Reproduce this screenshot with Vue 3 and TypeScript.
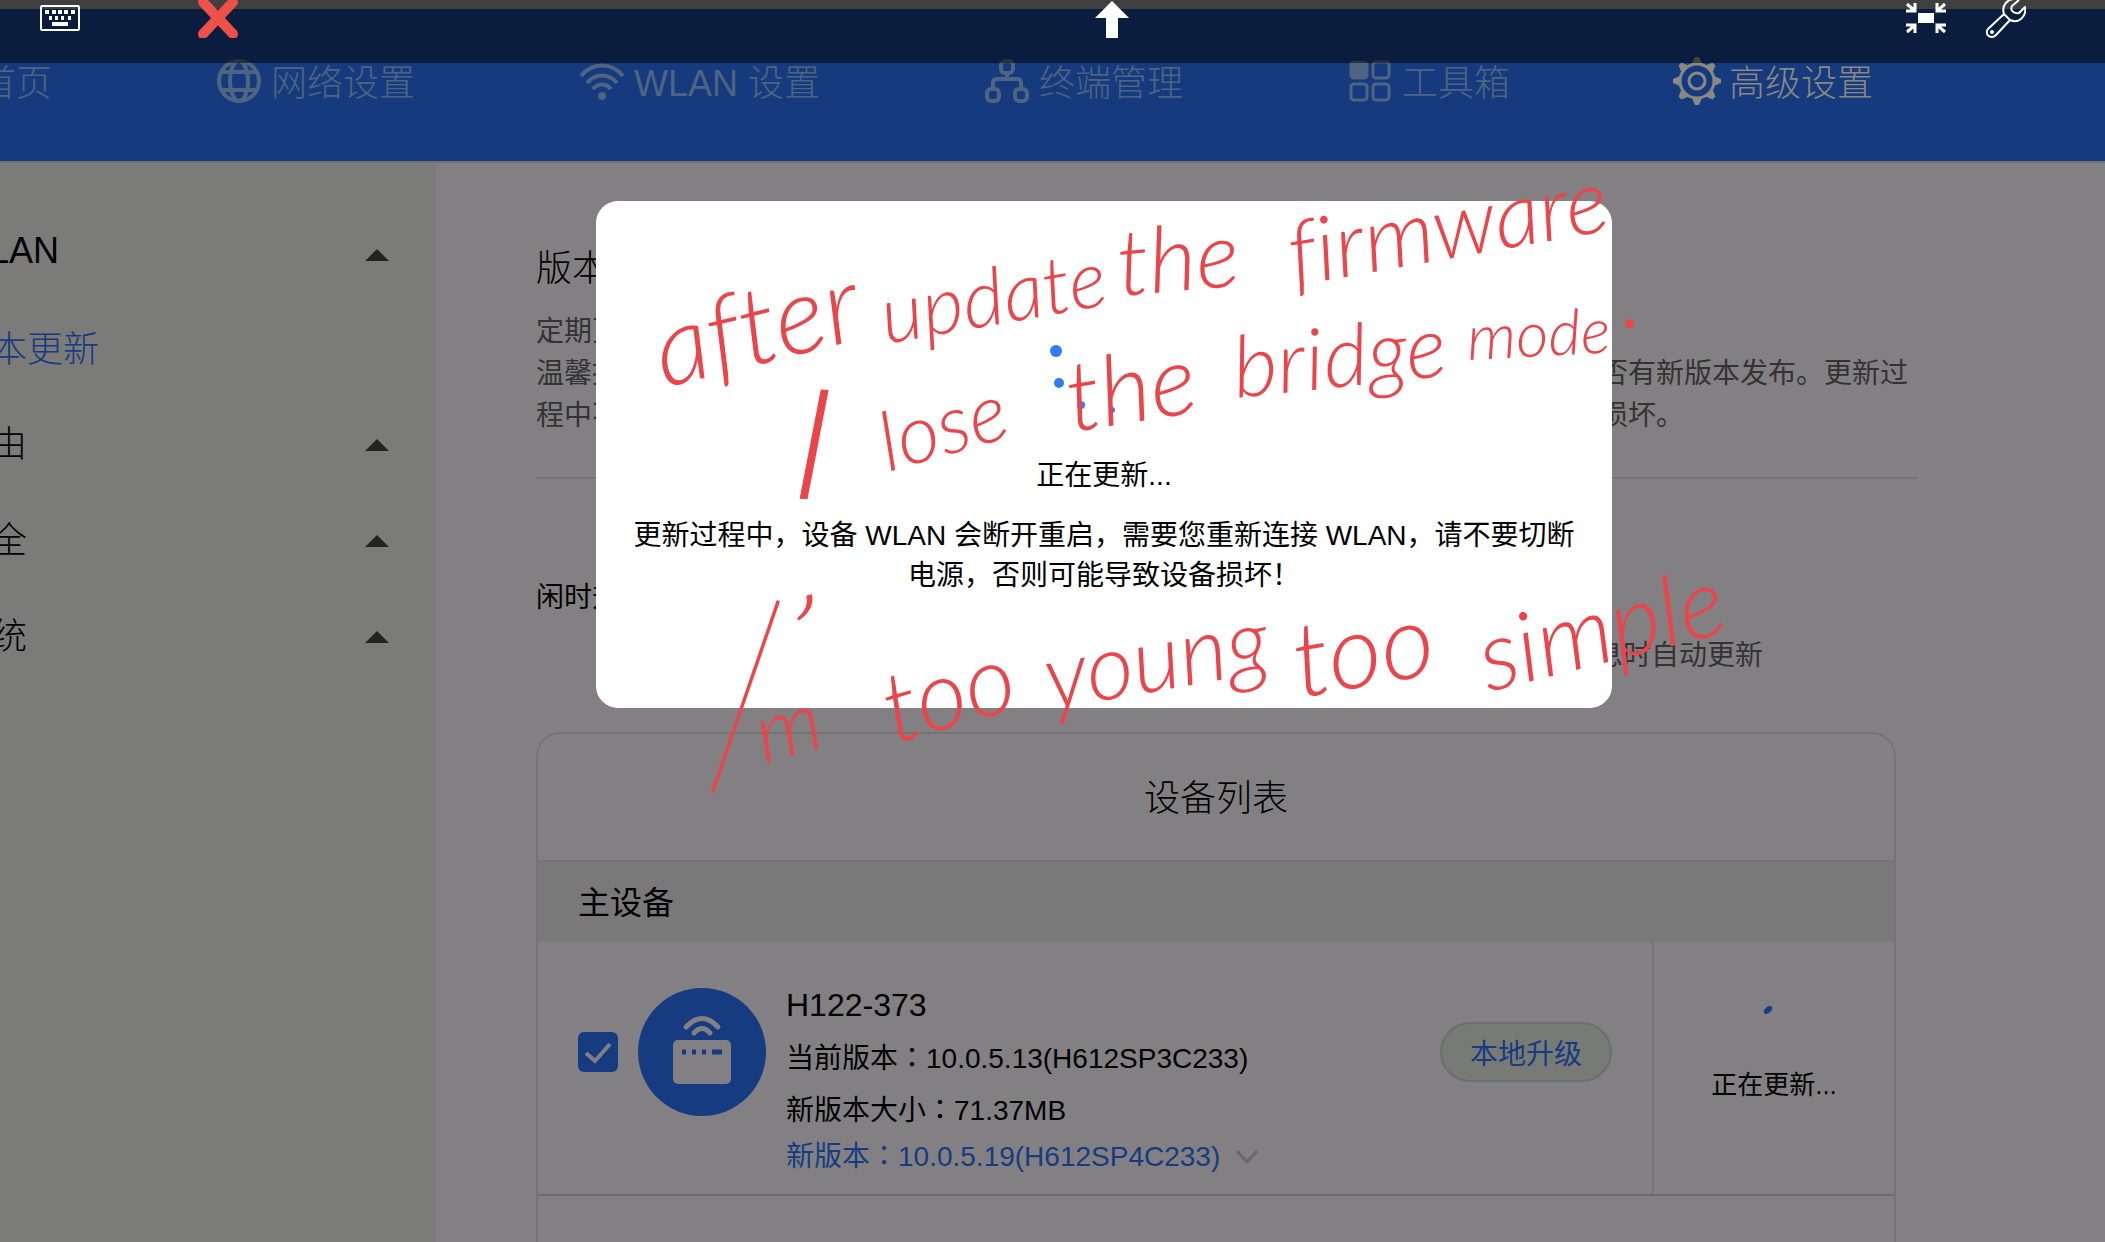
<script setup lang="ts">
import { ref } from 'vue'

interface NavItem {
  label: string
  icon: 'none' | 'globe' | 'wifi' | 'tree' | 'grid' | 'gear'
  active?: boolean
}

interface SideItem {
  label: string
  sub?: boolean
}

interface Note {
  text: string
  x: number
  y: number
  size: number
  angle: number
  weight?: 'thin' | 'bold'
}

const navItems: NavItem[] = [
  { label: '首页', icon: 'none' },
  { label: '网络设置', icon: 'globe' },
  { label: 'WLAN 设置', icon: 'wifi' },
  { label: '终端管理', icon: 'tree' },
  { label: '工具箱', icon: 'grid' },
  { label: '高级设置', icon: 'gear', active: true },
]

const sideItems: SideItem[] = [
  { label: 'WLAN' },
  { label: '版本更新', sub: true },
  { label: '路由' },
  { label: '安全' },
  { label: '系统' },
]

const notes: Note[] = [
  { text: 'after', x: 664, y: 388, size: 108, angle: -14 },
  { text: 'update', x: 886, y: 344, size: 80, angle: -10 },
  { text: 'the', x: 1120, y: 296, size: 92, angle: -5 },
  { text: 'firmware', x: 1294, y: 286, size: 90, angle: -10 },
  { text: 'I', x: 790, y: 498, size: 156, angle: 4 },
  { text: 'lose', x: 888, y: 472, size: 82, angle: -16 },
  { text: 'the', x: 1072, y: 432, size: 98, angle: -9 },
  { text: 'bridge', x: 1236, y: 398, size: 86, angle: -6 },
  { text: 'mode', x: 1468, y: 360, size: 63, angle: -3 },
  { text: '.', x: 1624, y: 328, size: 60, angle: 0, weight: 'bold' },
  { text: 'I', x: 690, y: 788, size: 288, angle: 12, weight: 'thin' },
  { text: '’', x: 776, y: 686, size: 130, angle: 8 },
  { text: 'm', x: 764, y: 764, size: 84, angle: -16 },
  { text: 'too', x: 894, y: 744, size: 98, angle: -16 },
  { text: 'young', x: 1050, y: 710, size: 92, angle: -10 },
  { text: 'too', x: 1300, y: 698, size: 104, angle: -10 },
  { text: 'simple', x: 1488, y: 692, size: 97, angle: -14 },
]

const selected = ref(true)
</script>

<template>
  <div class="page">
    <header class="header">
      <nav class="nav">
        <a v-for="item in navItems" :key="item.label" href="#" class="nav-item" :class="{ active: item.active }">
          <svg v-if="item.icon === 'globe'" class="nav-icon" viewBox="0 0 48 48" fill="none" stroke="currentColor" stroke-width="4">
            <circle cx="24" cy="24" r="20" />
            <ellipse cx="24" cy="24" rx="9" ry="20" />
            <path d="M6 15H42M6 33H42" />
          </svg>
          <svg v-else-if="item.icon === 'wifi'" class="nav-icon" viewBox="0 0 48 48" fill="none" stroke="currentColor" stroke-width="4">
            <path d="M3 19C14 5 34 5 45 19M9 26C17 16 31 16 39 26M15 32C20 26 28 26 33 32" />
            <circle cx="24" cy="39" r="4" fill="currentColor" stroke="none" />
          </svg>
          <svg v-else-if="item.icon === 'tree'" class="nav-icon" viewBox="0 0 48 48" fill="none" stroke="currentColor" stroke-width="4">
            <rect x="18" y="4" width="12" height="12" rx="4" />
            <rect x="4" y="32" width="12" height="12" rx="4" />
            <rect x="32" y="32" width="12" height="12" rx="4" />
            <path d="M24 16V22M10 32V26Q10 22 14 22H34Q38 22 38 26V32" />
          </svg>
          <svg v-else-if="item.icon === 'grid'" class="nav-icon" viewBox="0 0 48 48" fill="none" stroke="currentColor" stroke-width="3">
            <rect x="5" y="5" width="16" height="16" rx="3" fill="currentColor" />
            <rect x="27" y="5" width="16" height="16" rx="3" />
            <rect x="5" y="27" width="16" height="16" rx="3" />
            <rect x="27" y="27" width="16" height="16" rx="3" />
          </svg>
          <svg v-else-if="item.icon === 'gear'" class="nav-icon" viewBox="0 0 48 48" fill="none" stroke="currentColor">
            <circle cx="24" cy="24" r="17" stroke-width="3" />
            <circle cx="24" cy="24" r="8" stroke-width="3" />
            <g fill="currentColor" stroke="none">
              <path v-for="a in 8" :key="a" d="M19 7L22 0H26L29 7Z" :transform="`rotate(${a * 45} 24 24)`" />
            </g>
          </svg>
          <span>{{ item.label }}</span>
        </a>
      </nav>
    </header>

    <div class="body">
      <aside class="sidebar">
        <a v-for="item in sideItems" :key="item.label" href="#" class="side-item" :class="{ sub: item.sub }">
          <span>{{ item.label }}</span>
          <svg v-if="!item.sub" class="caret" viewBox="0 0 24 12"><path d="M12 0L24 12H0Z" fill="#222422" /></svg>
        </a>
      </aside>

      <main class="main">
        <section class="intro">
          <h1>版本更新</h1>
          <p>定期更新设备版本，可以获得更好的使用体验。</p>
          <p>温馨提示：系统每天会自动检查新版本，您也可以随时手动点击检查更新按钮，确认是否有新版本发布。更新过程中不要断开电源或网络连接，也不要进行其它操作，请耐心等待，否则可能导致设备损坏。</p>
        </section>

        <section class="idle">
          <h2>闲时升级</h2>
          <p>开启后，设备将在检测到新版本后，于您休息时自动更新</p>
        </section>

        <section class="card">
          <h2 class="card-title">设备列表</h2>
          <h3 class="group">主设备</h3>
          <div class="device">
            <input v-model="selected" type="checkbox" class="check" aria-label="H122-373" />
            <svg class="router" viewBox="0 0 128 128">
              <circle cx="64" cy="64" r="64" fill="#163b80" />
              <g fill="none" stroke="#838083" stroke-width="5" stroke-linecap="round">
                <path d="M48 39Q64 22 80 39M56 45Q64 36 72 45" />
              </g>
              <rect x="35" y="52" width="58" height="44" rx="5" fill="#838083" />
              <path d="M44 64h4M54 64h4M64 64h4M74 64h10" stroke="#163b80" stroke-width="5" />
            </svg>
            <div class="info">
              <span class="name">H122-373</span>
              <span class="row">当前版本：10.0.5.13(H612SP3C233)</span>
              <span class="row">新版本大小：71.37MB</span>
              <a href="#" class="row latest">新版本：10.0.5.19(H612SP4C233)
                <svg class="chevron" viewBox="0 0 22 14"><path d="M1 1L11 12L21 1" fill="none" stroke="#676967" stroke-width="3" /></svg>
              </a>
            </div>
            <button type="button" class="local">本地升级</button>
            <div class="status">
              <svg class="mini-dot" viewBox="0 0 10 10"><ellipse cx="5" cy="5" rx="5" ry="3" fill="#123c8c" transform="rotate(-40 5 5)" /></svg>
              <span>正在更新...</span>
            </div>
          </div>
        </section>
      </main>
    </div>

    <div class="overlay">
      <div class="modal" role="dialog" aria-label="正在更新">
        <svg class="spinner" viewBox="0 0 100 80" fill="#2f7df6">
          <circle cx="6" cy="10" r="6" />
          <circle cx="9" cy="42" r="5" />
          <circle cx="31" cy="64" r="4" />
          <circle cx="62" cy="69" r="3" />
          <circle cx="92" cy="54" r="1" />
        </svg>
        <p class="modal-state">正在更新...</p>
        <p class="modal-text">更新过程中，设备 WLAN 会断开重启，需要您重新连接 WLAN，请不要切断电源，否则可能导致设备损坏！</p>
      </div>
    </div>

    <div class="toolbar">
      <button type="button" aria-label="键盘">
        <svg class="t40" viewBox="0 0 40 38" fill="#fff">
          <rect x="1" y="6" width="38" height="24" rx="1" fill="none" stroke="#fff" stroke-width="2" />
          <path d="M5 10h4v4h-4zM12 10h4v4h-4zM18 10h4v4h-4zM24 10h4v4h-4zM31 10h4v4h-4zM9 16h3v4h-3zM15 16h3v4h-3zM21 16h3v4h-3zM28 16h3v4h-3zM12 22h16v4h-16z" />
        </svg>
      </button>
      <button type="button" class="close" aria-label="关闭">
        <svg class="t40" viewBox="0 0 40 38"><path d="M5 2L35 34M35 2L5 34" stroke="#ee5148" stroke-width="10" stroke-linecap="round" /></svg>
      </button>
      <button type="button" class="up" aria-label="向上">
        <svg class="t34" viewBox="0 0 34 38"><path d="M17 1L34 18H23V38H11V18H0Z" fill="#fff" /></svg>
      </button>
      <button type="button" aria-label="缩小">
        <svg class="t40" viewBox="0 0 40 38" fill="none" stroke="#fff" stroke-width="3">
          <path d="M0 11H9V3M9 11L1 4M40 11H31V3M31 11L39 4M0 25H9V33M9 25L1 32M40 25H31V33M31 25L39 32" />
          <rect x="12" y="13" width="16" height="10" fill="#fff" stroke="none" />
        </svg>
      </button>
      <button type="button" aria-label="设置工具">
        <svg class="t40" viewBox="0 0 40 38" fill="none" stroke="#fff" stroke-width="2" stroke-linejoin="round">
          <path d="M31 -1C22 -2 15 5 18 14L2 29C-1 33 2 37 6 37C8 37 9 36 10 35L24 20C32 24 41 17 39 7L33 13C27 14 24 10 26 6L33 0M18 14L24 20" />
          <circle cx="6" cy="32" r="1" />
        </svg>
      </button>
    </div>

    <svg class="notes">
      <text v-for="(n, i) in notes" :key="i" :class="n.weight" :font-size="n.size" :transform="`translate(${n.x} ${n.y}) rotate(${n.angle})`">{{ n.text }}</text>
    </svg>
  </div>
</template>

<style>
body {
  margin: 0;
  background: #838083;
}
</style>

<style scoped>
.page {
  position: relative;
  display: flex;
  flex-direction: column;
  height: 100vh;
  padding-top: 9px;
  box-sizing: border-box;
  overflow: hidden;
  font-family: "Liberation Sans", "Noto Sans CJK SC", sans-serif;
  font-weight: 400;
  color: #000;
  background: #838083;
}
h1, h2, h3, p { margin: 0; font-weight: 400; }
a { color: inherit; text-decoration: none; }
.header {
  flex: none;
  height: 152px;
  box-sizing: content-box;
  background: #163a7e;
  border-bottom: 2px solid #727272;
}
.nav {
  display: flex;
  gap: 163px;
  margin-left: -20px;
  padding-top: 48px;
}
.nav-item {
  display: flex;
  flex: none;
  align-items: center;
  gap: 8px;
  height: 48px;
  font-size: 36px;
  font-weight: 300;
  line-height: 48px;
  white-space: nowrap;
  color: #4f6480;
}
.nav-item span { padding-top: 6px; }
.nav-item.active { color: #8b8782; }
.nav-icon { width: 48px; height: 48px; }
.body { display: flex; flex: 1; min-height: 0; }
.sidebar {
  flex: none;
  width: 436px;
  box-sizing: border-box;
  padding: 40px 47px 0 0;
  background: #7b7c7a;
}
.side-item {
  display: flex;
  align-items: center;
  justify-content: space-between;
  height: 96px;
  margin-left: -45px;
  font-size: 36px;
  font-weight: 300;
}
.side-item.sub { height: 94px; color: #163b80; }
.caret { width: 24px; height: 12px; padding-top: 8px; }
.main {
  display: flex;
  flex: 1;
  flex-direction: column;
  min-width: 0;
  padding: 78px 188px 0 100px;
}
.intro {
  padding-bottom: 40px;
  border-bottom: 2px solid #747673;
}
.intro h1 { font-size: 36px; font-weight: 300; line-height: 56px; margin-bottom: 14px; }
.intro p { font-size: 28px; line-height: 42px; color: #333; }
.idle {
  display: flex;
  justify-content: space-between;
  padding: 98px 154px 0 0;
  font-size: 28px;
}
.idle h2 { font-size: 28px; line-height: 42px; }
.idle p { padding-top: 58px; line-height: 42px; color: #333; }
.card {
  flex: 1;
  margin: 55px 21px 0 0;
  border: 2px solid #737572;
  border-bottom: 0;
  border-radius: 24px 24px 0 0;
}
.card-title {
  padding-top: 4px;
  font-size: 36px;
  font-weight: 300;
  line-height: 122px;
  text-align: center;
}
.group {
  padding: 2px 0 0 40px;
  font-size: 32px;
  line-height: 78px;
  background: #79797a;
  border-top: 2px solid #737572;
}
.device {
  display: flex;
  align-items: center;
  height: 252px;
  padding-left: 40px;
  border-bottom: 2px solid #696b73;
}
.check {
  flex: none;
  width: 40px;
  height: 40px;
  margin: -32px 20px 0 0;
  appearance: none;
  border-radius: 6px;
  background: #163b80;
}
.check:checked {
  background: #163b80 url("data:image/svg+xml,%3Csvg xmlns='http://www.w3.org/2000/svg' viewBox='0 0 40 40'%3E%3Cpath d='M8 21L17 29L32 12' fill='none' stroke='%23838083' stroke-width='4'/%3E%3C/svg%3E") center / 40px 40px;
}
.router { flex: none; width: 128px; height: 128px; margin: -32px 20px 0 0; }
.info {
  display: flex;
  flex: 1;
  flex-direction: column;
  align-items: flex-start;
  padding-top: 18px;
  white-space: nowrap;
}
.name { font-size: 32px; line-height: 56px; }
.row {
  font-family: "Liberation Sans", "Noto Sans CJK TC", sans-serif;
  font-size: 28px;
  line-height: 52px;
}
.latest { display: flex; align-items: center; gap: 16px; line-height: 40px; color: #163b80; }
.chevron { width: 22px; height: 14px; }
.local {
  flex: none;
  width: 172px;
  height: 60px;
  margin: -32px 40px 0 0;
  padding: 0;
  border: 2px solid #6b6e72;
  border-radius: 30px;
  background: #787a76;
  color: #163b80;
  font: inherit;
  font-size: 28px;
}
.status {
  display: flex;
  flex: none;
  flex-direction: column;
  align-items: center;
  gap: 52px;
  width: 242px;
  height: 100%;
  padding-top: 63px;
  box-sizing: border-box;
  border-left: 2px solid #737572;
  font-size: 26px;
  line-height: 36px;
}
.mini-dot { width: 10px; height: 10px; margin-right: 12px; }
.overlay {
  position: absolute;
  inset: 0;
  display: flex;
  align-items: flex-start;
  justify-content: center;
  padding: 201px 0 0 103px;
}
.modal {
  display: flex;
  flex-direction: column;
  align-items: center;
  width: 1016px;
  height: 507px;
  box-sizing: border-box;
  padding: 140px 36px 0;
  border-radius: 22px;
  background: #fff;
  text-align: center;
}
.spinner { width: 100px; height: 80px; margin-right: 8px; }
.modal-state { margin-top: 35px; font-size: 28px; line-height: 40px; }
.modal-text { margin-top: 20px; font-size: 28px; line-height: 40px; }
.toolbar {
  position: absolute;
  top: 0;
  left: 0;
  right: 0;
  display: flex;
  align-items: flex-start;
  height: 63px;
  box-sizing: border-box;
  padding: 0 79px 0 40px;
  background: rgba(0, 0, 0, 0.5);
}
.toolbar button {
  display: block;
  padding: 0;
  border: 0;
  background: none;
}
.toolbar svg { display: block; height: 38px; }
.toolbar .close { margin-left: 118px; }
.toolbar .up { margin: 0 auto; padding-left: 80px; }
.toolbar button:last-child { margin-left: 40px; }
.t40 { width: 40px; }
.t34 { width: 34px; }
.notes {
  position: absolute;
  inset: 0;
  width: 100%;
  height: 100%;
  pointer-events: none;
  fill: #e9454b;
  font-family: "Lato", sans-serif;
  font-style: italic;
  font-weight: 300;
  font-variant-ligatures: none;
}
.notes .thin { font-weight: 100; }
.notes .bold { font-weight: 700; }
</style>
